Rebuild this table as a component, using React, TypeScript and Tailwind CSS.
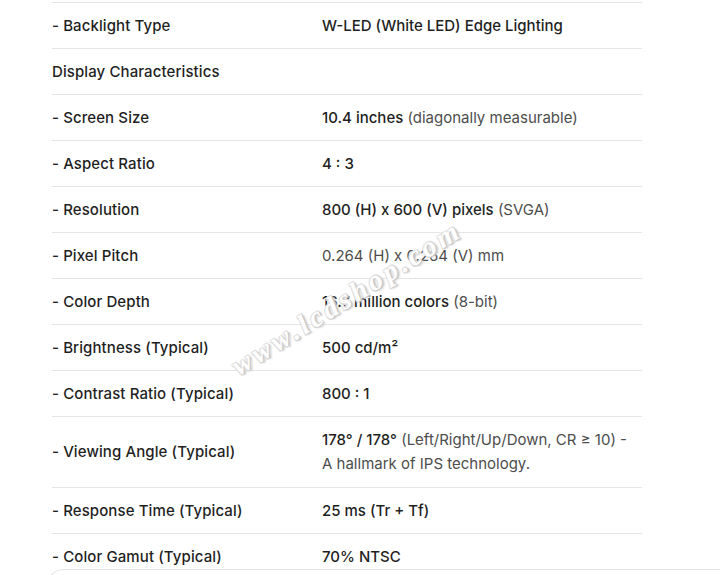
import React from "react";

type Row = {
  label: string;
  main?: string;
  rest?: string;
  tall?: boolean;
};

const rows: Row[] = [
  { label: "- Backlight Type", main: "W-LED (White LED) Edge Lighting" },
  { label: "Display Characteristics" },
  { label: "- Screen Size", main: "10.4 inches", rest: " (diagonally measurable)" },
  { label: "- Aspect Ratio", main: "4 : 3" },
  { label: "- Resolution", main: "800 (H) x 600 (V) pixels", rest: " (SVGA)" },
  { label: "- Pixel Pitch", rest: "0.264 (H) x 0.264 (V) mm" },
  { label: "- Color Depth", main: "16.7 million colors", rest: " (8-bit)" },
  { label: "- Brightness (Typical)", main: "500 cd/m²" },
  { label: "- Contrast Ratio (Typical)", main: "800 : 1" },
  {
    label: "- Viewing Angle (Typical)",
    main: "178° / 178°",
    rest: " (Left/Right/Up/Down, CR ≥ 10) - A hallmark of IPS technology.",
    tall: true,
  },
  { label: "- Response Time (Typical)", main: "25 ms (Tr + Tf)" },
  { label: "- Color Gamut (Typical)", main: "70% NTSC" },
];

export default function App() {
  return (
    <div
      className="relative w-[720px] h-[575px] overflow-hidden bg-white"
      style={{ fontFamily: "Inter, 'Noto Sans', sans-serif" }}
    >
      <div className="pt-[2px] pl-[52px] w-[642px]">
        {rows.map((r, i) => (
          <div
            key={i}
            className={
              r.tall
                ? "grid grid-cols-[270px_1fr] border-t border-[#e5e5e5] text-[15px] leading-[24px] pt-[11px] pb-[11px]"
                : "grid grid-cols-[270px_1fr] border-t border-[#e5e5e5] text-[15px] leading-[24px] py-[10.5px]"
            }
          >
            <div className="font-medium text-[#1f1f1f] tracking-[0.1px] flex items-center">{r.label}</div>
            <div className="pr-[12px] text-[#1f1f1f]">
              {r.main && <span className="font-medium">{r.main}</span>}
              {r.rest && <span className="text-[#4d4d4d]">{r.rest}</span>}
            </div>
          </div>
        ))}
      </div>

      <div
        className="absolute left-[214px] top-[277px] origin-center -rotate-[32deg] text-[28px] font-bold italic tracking-[4px] text-white whitespace-nowrap select-none pointer-events-none"
        style={{
          fontFamily: "'Liberation Serif', serif",
          textShadow:
            "1px 1px 0 #c8c8c8, -1px -1px 0 #e2e2e2, 1px -1px 0 #dcdcdc, -1px 1px 0 #d6d6d6, 2px 2px 2px #d0d0d0",
        }}
      >
        www.lcdshop.com
      </div>

      <div className="absolute left-[47px] top-[569px] w-[720px] h-[60px] rounded-2xl border border-[#e5e5e5] bg-white" />
    </div>
  );
}
